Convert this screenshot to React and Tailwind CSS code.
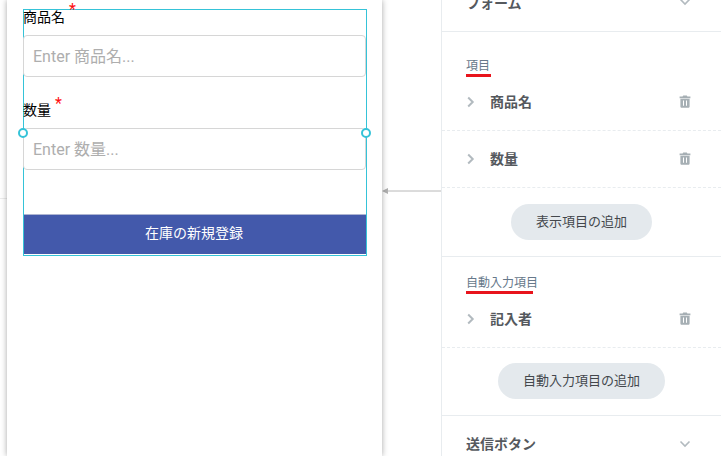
import React from "react";

function Trash() {
  return (
    <svg width="12" height="13" viewBox="0 0 12 13" className="text-[#a6afb4]" fill="currentColor">
      <path d="M4.2 0.4h3.6l.6 1H11.4v1.9H.6V1.4h3z" />
      <path fillRule="evenodd" d="M1.4 3.8h9.2v7.7c0 .8-.6 1.3-1.3 1.3H2.7c-.7 0-1.3-.5-1.3-1.3zM4 5.6v5.2h1V5.6zM7 5.6v5.2h1V5.6z" />
    </svg>
  );
}

function ChevronRight() {
  return (
    <svg width="8" height="12" viewBox="0 0 8 12" fill="none" stroke="#b2babf" strokeWidth="2">
      <path d="M1.2 1.5 5.7 6l-4.5 4.5" />
    </svg>
  );
}

function ChevronDown() {
  return (
    <svg width="12" height="8" viewBox="0 0 12 8" fill="none" stroke="#b2babf" strokeWidth="1.6">
      <path d="M1.5 1.5 6 6l4.5-4.5" />
    </svg>
  );
}

function Row({ label, h }) {
  return (
    <div className={`flex items-center border-b border-dashed border-[#e8ecef] pl-[25px] pr-[30px] ${h}`}>
      <span className="flex w-[23px] shrink-0"><ChevronRight /></span>
      <span className="flex-1 text-[14px] font-bold leading-none text-[#55595e]">{label}</span>
      <Trash />
    </div>
  );
}

function Field({ label, placeholder, star, className }) {
  return (
    <div className={`-ml-px w-[343px] ${className}`}>
      <div className="relative h-[28px] text-[14px] leading-[20px] text-black">
        {label}
        <span className={`absolute text-[16px] leading-none text-[#ff1010] ${star}`}>*</span>
      </div>
      <input
        readOnly
        placeholder={placeholder}
        className="block h-[42px] w-full rounded-[4px] border border-[#d6d6d6] bg-white px-[9px] text-[16px] text-black outline-none placeholder:text-[#aeaeae]"
      />
    </div>
  );
}

function Handle({ side }) {
  return (
    <span className={`absolute top-[118px] h-[10px] w-[10px] rounded-full border-2 border-[#35c3d8] bg-white ${side}`} />
  );
}

function AddButton({ children, w }) {
  return (
    <div className="flex justify-center">
      <button className={`h-[36px] rounded-full bg-[#e4e9ed] text-[13px] text-[#43474c] ${w}`}>{children}</button>
    </div>
  );
}

export default function App() {
  return (
    <div className="flex h-[456px] w-[721px] overflow-hidden bg-white font-['Roboto','Noto_Sans_CJK_JP',sans-serif]">
      <div className="relative w-[441px] shrink-0">
        <div className="absolute left-0 top-[198px] h-px w-[7px] bg-[#ececec]" />
        <div className="absolute left-[382px] top-[191px] flex h-[9px] w-[59px] -translate-y-1/2 items-center">
          <svg width="59" height="9" viewBox="0 0 59 9" className="block">
            <path d="M0 4.5 6 1.5v6z" fill="#b0b0b0" />
            <path d="M5 4.5h54" stroke="#b8b8b8" strokeWidth="1" />
          </svg>
        </div>
        <div className="relative ml-[7px] h-[456px] w-[375px] bg-white pl-[16px] pt-[9px] shadow-[0_0_6px_rgba(0,0,0,0.35)]">
          <div className="relative h-[247px] w-[344px] border border-[#35c3d8]">
            <Field label="商品名" placeholder="Enter 商品名..." star="left-[46px] -top-[5px]" className="-mt-[3px]" />
            <Field label="数量" placeholder="Enter 数量..." star="left-[32px] -top-[4px]" className="mt-[23px]" />
            <button className="absolute bottom-[1px] left-0 h-[40px] w-full border-t border-[#aeb5d2] bg-[#4359ab] pb-[3px] pr-[2px] text-[14px] text-white">
              在庫の新規登録
            </button>
            <Handle side="-left-[6px]" />
            <Handle side="-right-[5px]" />
          </div>
        </div>
      </div>
      <div className="h-[456px] flex-1 border-l border-[#e8ecef]">
        <div className="relative h-[32px] border-b border-[#e8ecef]">
          <span className="absolute left-[24px] top-[-5px] text-[14px] font-bold leading-[16px] text-[#55595e]">フォーム</span>
          <span className="absolute right-[30px] top-[-2px] flex"><ChevronDown /></span>
        </div>
        <div className="h-[225px] border-b border-[#e8ecef]">
          <div className="px-[24px] pt-[26px]">
            <span className="block w-[25px] border-b-[3px] border-[#e8141c] text-[12px] leading-[16px] text-[#66788a]">項目</span>
          </div>
          <Row label="商品名" h="h-[54px] pb-[4px]" />
          <Row label="数量" h="h-[57px] pb-px" />
          <div className="pt-[16px]">
            <AddButton w="w-[141px]">表示項目の追加</AddButton>
          </div>
        </div>
        <div className="h-[159px] border-b border-[#e8ecef]">
          <div className="px-[24px] pt-[18px]">
            <span className="block w-[67px] border-b-[3px] border-[#e8141c] text-[12px] leading-[16px] whitespace-nowrap text-[#66788a]">自動入力項目</span>
          </div>
          <Row label="記入者" h="h-[54px] pb-[4px]" />
          <div className="pt-[15px]">
            <AddButton w="w-[167px]">自動入力項目の追加</AddButton>
          </div>
        </div>
        <div className="flex h-[56px] items-center pl-[24px] pr-[30px]">
          <span className="flex-1 text-[14px] font-bold leading-none text-[#55595e]">送信ボタン</span>
          <ChevronDown />
        </div>
      </div>
    </div>
  );
}
